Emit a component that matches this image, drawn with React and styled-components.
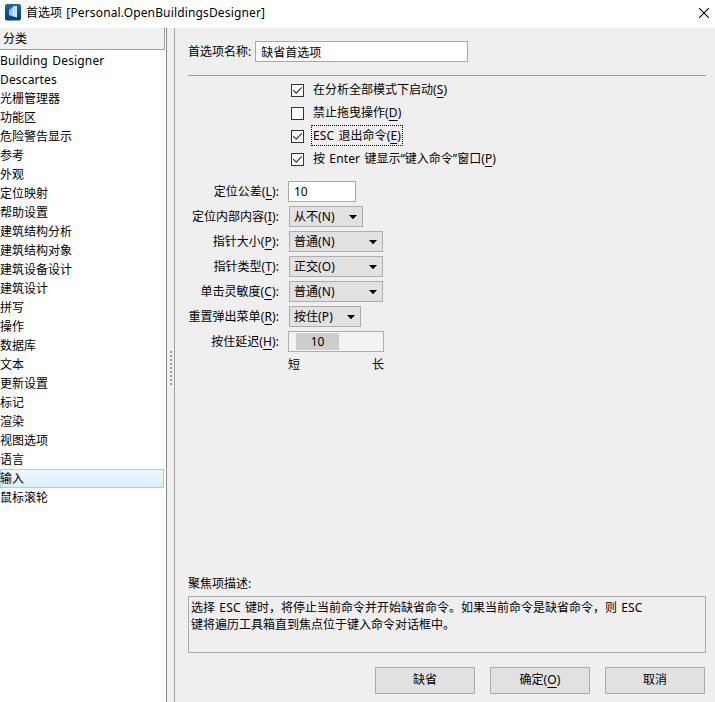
import React from "react";
import styled, { createGlobalStyle, css } from "styled-components";

const GlobalStyle = createGlobalStyle`
  * { box-sizing: border-box; }
  body {
    margin: 0;
    background: #fff;
    color: #000;
    font: 12px/18px "Noto Sans", "Noto Sans CJK SC", sans-serif;
    overflow: hidden;
  }
  input, button { font: inherit; color: inherit; margin: 0; border-radius: 0; }
`;

const Dialog = styled.div`
  width: 715px;
  height: 702px;
  display: flex;
  flex-direction: column;
  overflow: hidden;
  white-space: nowrap;
  word-spacing: 1.2px;
`;

const LatinText = styled.span`
  letter-spacing: 0.15px;
`;

const TitleBar = styled.header`
  height: 28px;
  flex: none;
  display: flex;
  align-items: center;
  padding: 0 6px 3px 5px;
  background: #fff;
`;

const Title = styled.h1`
  flex: 1;
  margin: 1px 0 0 5px;
  font-size: 12px;
  font-weight: 400;
`;

const CloseButton = styled.button`
  width: 10px;
  height: 10px;
  padding: 0;
  border: 0;
  background: none;
  display: flex;
`;

const Body = styled.div`
  flex: 1;
  min-height: 0;
  display: flex;
`;

const Sidebar = styled.aside`
  width: 167px;
  background: #fff;
  border-right: 1px solid #8a8a8c;
`;

const SidebarHeader = styled.div`
  width: 165px;
  height: 22px;
  padding: 2px 3px 0;
  background: #f0f0f0;
  border: solid #a0a0a0;
  border-width: 0 1px 1px 0;
`;

const CategoryList = styled.ul`
  list-style: none;
  margin: 1px 0 0;
  padding: 0;
`;

const Category = styled.li`
  width: 164px;
  height: 19px;
  line-height: 19px;
  ${(p) =>
    p.$selected &&
    css`
      background: linear-gradient(#f0f8fd, #d9effa);
      box-shadow: inset 0 0 0 1px #9fd3ea;
    `}
`;

const Splitter = styled.div`
  width: 8px;
  background: #f0eff0;
  border-right: 1px solid #a0a0a0;
  display: flex;
  justify-content: center;
  padding-top: 323px;
`;

const Grip = styled.div`
  width: 2px;
  height: 34px;
  background: repeating-linear-gradient(#a0a0a0 0 2px, transparent 2px 4px);
`;

const Main = styled.main`
  flex: 1;
  display: flex;
  flex-direction: column;
  padding: 13px 9px 8px 13px;
  background: #f0eff0;
`;

const NameRow = styled.div`
  display: flex;
  align-items: center;
  height: 21px;
  gap: 4px;
`;

const TextInput = styled.input`
  width: ${(p) => p.$width}px;
  height: 21px;
  padding: 0 5px;
  border: 1px solid #a9a9a9;
  background: #fff;
  outline: 0;
`;

const Rule = styled.hr`
  width: 100%;
  height: 1px;
  margin: 13px 0 2px;
  border: 0;
  background: #a0a0a0;
`;

const CheckRow = styled.label`
  height: 23px;
  display: flex;
  align-items: center;
  margin-left: 103px;
`;

const CheckBox = styled.span`
  width: 13px;
  height: 13px;
  margin: 1px 7px 0 0;
  border: 1px solid #333;
  background: #fff;
  display: flex;
`;

const CheckLabel = styled.span`
  height: 21px;
  line-height: 19px;
  padding: 0 1px;
  border: 1px ${(p) => (p.$focused ? "dotted #000" : "solid transparent")};
`;

const Settings = styled.div`
  display: grid;
  grid-template-columns: 91px auto;
  grid-auto-rows: 25px;
  column-gap: 9px;
  align-items: center;
  justify-content: start;
  margin-top: 9px;
`;

const SettingLabel = styled.label`
  justify-self: end;
`;

const Mnemonic = styled.span`
  text-decoration: underline;
  text-decoration-thickness: 1px;
  text-decoration-skip-ink: none;
  text-underline-offset: 3px;
`;

const Select = styled.button`
  width: ${(p) => p.$width}px;
  height: 21px;
  margin-left: 1px;
  padding: 0 5px 0 4px;
  border: 1px solid #adadad;
  background: #e1e1e1;
  display: flex;
  align-items: center;
  justify-content: space-between;
`;

const SliderTrack = styled.div`
  width: 96px;
  height: 21px;
  padding: 1px 7px;
  border: 1px solid #adadad;
  background: #f3f3f3;
`;

const SliderThumb = styled.div`
  width: 43px;
  height: 17px;
  line-height: 17px;
  text-align: center;
  background: #cdcdcd;
`;

const SliderScale = styled.div`
  grid-column: 2;
  align-self: start;
  width: 96px;
  padding-top: 2px;
  display: flex;
  justify-content: space-between;
`;

const DescriptionTitle = styled.div`
  margin-top: auto;
  height: 21px;
`;

const Description = styled.p`
  flex: none;
  height: 57px;
  margin: 0 0 14px;
  padding: 2px 2px;
  border: 1px solid #a9a9a9;
  line-height: 17px;
  white-space: pre-line;
`;

const Actions = styled.footer`
  display: flex;
  justify-content: flex-end;
  gap: 15px;
  padding-right: 1px;
`;

const ActionButton = styled.button`
  width: 100px;
  height: 27px;
  padding: 0 0 1px;
  border: 1px solid #adadad;
  background: #e1e1e1;
`;

const AppLogo = () => (
  <svg width="16" height="17" viewBox="0 0 16 17">
    <defs>
      <linearGradient id="logo" x2="0" y2="1">
        <stop stopColor="#1c6caf" />
        <stop offset="1" stopColor="#053c70" />
      </linearGradient>
    </defs>
    <rect width="16" height="16.5" rx="2" fill="url(#logo)" />
    <path d="M4 6 8.5 2.5V12.5L4 11.2Z" fill="#9cc9ec" />
    <path d="M8 2.5 12 2V13.5L8 12.3Z" fill="#eef7fd" />
    <path d="M9.5 3V12M11 3V12.5M5.5 6V11" stroke="#75a9d4" strokeWidth=".5" />
  </svg>
);

const CloseIcon = () => (
  <svg width="10" height="10" viewBox="0 0 10 10">
    <path d="M0 0 10 10M10 0 0 10" stroke="#000" strokeWidth="1.1" />
  </svg>
);

const CheckIcon = () => (
  <svg width="11" height="11" viewBox="0 0 11 11">
    <path d="M1.2 5.2 4.2 8.2 9.8 2.4" fill="none" stroke="#333" strokeWidth="1.2" />
  </svg>
);

const Caret = () => (
  <svg width="8" height="4" viewBox="0 0 8 4">
    <path d="M0 0H8L4 4.3Z" fill="#000" />
  </svg>
);

const categories = [
  "Building Designer", "Descartes", "光栅管理器", "功能区", "危险警告显示", "参考",
  "外观", "定位映射", "帮助设置", "建筑结构分析", "建筑结构对象", "建筑设备设计",
  "建筑设计", "拼写", "操作", "数据库", "文本", "更新设置", "标记", "渲染",
  "视图选项", "语言", "输入", "鼠标滚轮",
];

const options = [
  { text: "在分析全部模式下启动", hotkey: "S", checked: true },
  { text: "禁止拖曳操作", hotkey: "D", checked: false },
  { text: "ESC 退出命令", hotkey: "E", checked: true, focused: true },
  { text: "按 Enter 键显示“键入命令”窗口", hotkey: "P", checked: true },
];

const selects = [
  { text: "定位内部内容", hotkey: "I", value: "从不(N)", width: 74 },
  { text: "指针大小", hotkey: "P", value: "普通(N)", width: 94 },
  { text: "指针类型", hotkey: "T", value: "正交(O)", width: 94 },
  { text: "单击灵敏度", hotkey: "C", value: "普通(N)", width: 94 },
  { text: "重置弹出菜单", hotkey: "R", value: "按住(P)", width: 72 },
];

// Gives Latin runs slightly looser tracking than the Chinese text around them.
const Mixed = ({ children }) =>
  children
    .split(/([\x21-\x7e]+(?: [\x21-\x7e]+)*)/)
    .map((run, i) => (i % 2 ? <LatinText key={i}>{run}</LatinText> : run));

const Hotkey = ({ children }) => (
  <LatinText>(<Mnemonic>{children}</Mnemonic>)</LatinText>
);

export default function App() {
  return (
    <Dialog>
      <GlobalStyle />
      <TitleBar>
        <AppLogo />
        <Title><Mixed>首选项 [Personal.OpenBuildingsDesigner]</Mixed></Title>
        <CloseButton aria-label="关闭"><CloseIcon /></CloseButton>
      </TitleBar>
      <Body>
        <Sidebar>
          <SidebarHeader>分类</SidebarHeader>
          <CategoryList>
            {categories.map((name) => (
              <Category key={name} $selected={name === "输入"}>
                <Mixed>{name}</Mixed>
              </Category>
            ))}
          </CategoryList>
        </Sidebar>
        <Splitter><Grip /></Splitter>
        <Main>
          <NameRow>
            <span>首选项名称:</span>
            <TextInput $width={213} defaultValue="缺省首选项" />
          </NameRow>
          <Rule />
          {options.map((o) => (
            <CheckRow key={o.hotkey}>
              <CheckBox>{o.checked && <CheckIcon />}</CheckBox>
              <CheckLabel $focused={o.focused}>
                <Mixed>{o.text}</Mixed><Hotkey>{o.hotkey}</Hotkey>
              </CheckLabel>
            </CheckRow>
          ))}
          <Settings>
            <SettingLabel>定位公差<Hotkey>L</Hotkey>:</SettingLabel>
            <TextInput $width={68} defaultValue="10" />
            {selects.map((s) => (
              <React.Fragment key={s.hotkey}>
                <SettingLabel>{s.text}<Hotkey>{s.hotkey}</Hotkey>:</SettingLabel>
                <Select $width={s.width}>
                  <span><Mixed>{s.value}</Mixed></span>
                  <Caret />
                </Select>
              </React.Fragment>
            ))}
            <SettingLabel>按住延迟<Hotkey>H</Hotkey>:</SettingLabel>
            <SliderTrack><SliderThumb>10</SliderThumb></SliderTrack>
            <SliderScale><span>短</span><span>长</span></SliderScale>
          </Settings>
          <DescriptionTitle>聚焦项描述:</DescriptionTitle>
          <Description>
            <Mixed>{"选择 ESC 键时，将停止当前命令并开始缺省命令。如果当前命令是缺省命令，则 ESC\n键将遍历工具箱直到焦点位于键入命令对话框中。"}</Mixed>
          </Description>
          <Actions>
            <ActionButton>缺省</ActionButton>
            <ActionButton>确定<Hotkey>O</Hotkey></ActionButton>
            <ActionButton>取消</ActionButton>
          </Actions>
        </Main>
      </Body>
    </Dialog>
  );
}
